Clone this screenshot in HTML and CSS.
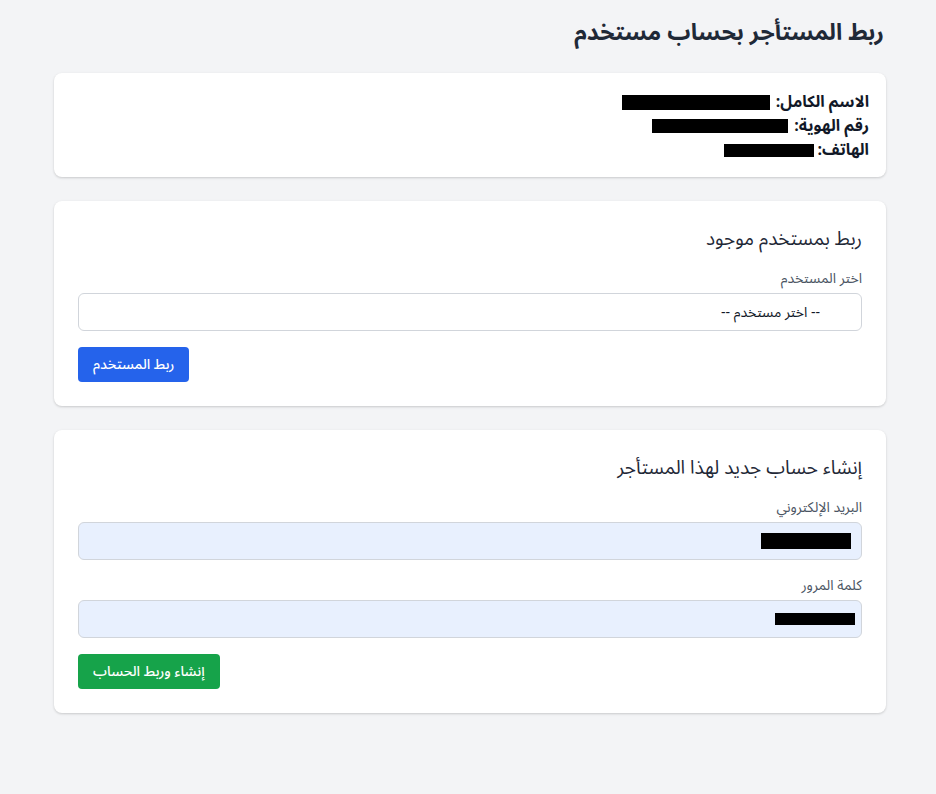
FILE: index.html
```html
<!DOCTYPE html>
<html lang="ar" dir="rtl">
  <head>
    <meta charset="UTF-8" />
    <meta name="viewport" content="width=device-width, initial-scale=1.0" />
    <title>ربط المستأجر بحساب مستخدم</title>
    <link rel="stylesheet" href="styles.css">
  </head>
  <body>
    <div class="page">
      <h1 class="page-title">ربط المستأجر بحساب مستخدم</h1>

      <!-- Tenant info -->
      <div class="card card-info">
        <div class="info-row"><b>الاسم الكامل:</b><span class="redact redact-name"></span></div>
        <div class="info-row"><b>رقم الهوية:</b> <span class="redact redact-id"></span></div>
        <div class="info-row"><b>الهاتف:</b> <span class="redact redact-phone"></span></div>
      </div>

      <!-- Link existing user -->
      <div class="card">
        <h2 class="card-title">ربط بمستخدم موجود</h2>
        <form>
          <label class="field-label" for="user">اختر المستخدم</label>
          <select id="user" class="field">
            <option value="" selected>-- اختر مستخدم --</option>
          </select>
          <button type="button" class="btn btn-blue">ربط المستخدم</button>
        </form>
      </div>

      <!-- Create new account -->
      <div class="card">
        <h2 class="card-title">إنشاء حساب جديد لهذا المستأجر</h2>
        <form>
          <label class="field-label" for="email">البريد الإلكتروني</label>
          <div class="field field-filled"><span class="redact redact-email"></span></div>
          <label class="field-label" for="password">كلمة المرور</label>
          <div class="field field-filled"><span class="redact redact-pass"></span></div>
          <button type="button" class="btn btn-green">إنشاء وربط الحساب</button>
        </form>
      </div>
    </div>
  </body>
</html>
```

FILE: styles.css
```css
body {
  margin: 0;
  background-color: #f3f4f6;
  font-family: "Noto Sans Arabic", "DejaVu Sans", sans-serif;
  color: #1f2937;
}

.page {
  width: 832px;
  margin: 0 50px 0 54px;
  padding: 17px 0 40px;
}

.page-title {
  margin: 0 0 24px;
  font-size: 23px;
  line-height: 32px;
  font-weight: 700;
  padding-right: 2px;
}

.card {
  background-color: #fff;
  border-radius: 8px;
  box-shadow: 0 1px 3px rgba(0, 0, 0, 0.12), 0 1px 2px rgba(0, 0, 0, 0.06);
  padding: 24px;
  margin-bottom: 24px;
}

.card-info {
  padding: 17px 17px 15px;
}

.info-row {
  display: flex;
  align-items: center;
  height: 24px;
  font-size: 16px;
  line-height: 22px;
  color: #111827;
}

.info-row b {
  font-weight: 700;
  white-space: pre;
}

.redact {
  display: inline-block;
  background-color: #000;
  vertical-align: middle;
}

.redact-name { width: 148px; height: 15px; margin-right: 6px; }
.redact-id { width: 136px; height: 14px; margin-right: 6px; }
.redact-phone { width: 90px; height: 13px; margin-right: 4px; }
.redact-email { width: 90px; height: 16px; }
.redact-pass { width: 80px; height: 12px; margin-right: -4px; }

.card-title {
  margin: 0 0 16px;
  font-size: 19px;
  line-height: 28px;
  font-weight: 400;
  color: #1f2937;
}

.field-label {
  display: block;
  font-size: 14px;
  line-height: 20px;
  color: #4b5563;
  margin-bottom: 4px;
}

.field {
  display: flex;
  align-items: center;
  box-sizing: border-box;
  width: 100%;
  height: 38px;
  border: 1px solid #d1d5db;
  border-radius: 6px;
  background-color: #fff;
  font-family: inherit;
  font-size: 14px;
  color: #111827;
  margin-bottom: 16px;
}

select.field {
  appearance: none;
  -webkit-appearance: none;
  padding: 0 41px 0 12px;
}

.field-filled {
  background-color: #e8f0fe;
  padding: 0 10px;
}

.btn {
  display: block;
  margin-right: auto;
  height: 35px;
  padding: 0 15px;
  border: none;
  border-radius: 4px;
  color: #fff;
  font-family: inherit;
  font-size: 14px;
  font-weight: 500;
  cursor: pointer;
}

.btn-blue {
  background-color: #2563eb;
}

.btn-green {
  background-color: #16a34a;
}
```
